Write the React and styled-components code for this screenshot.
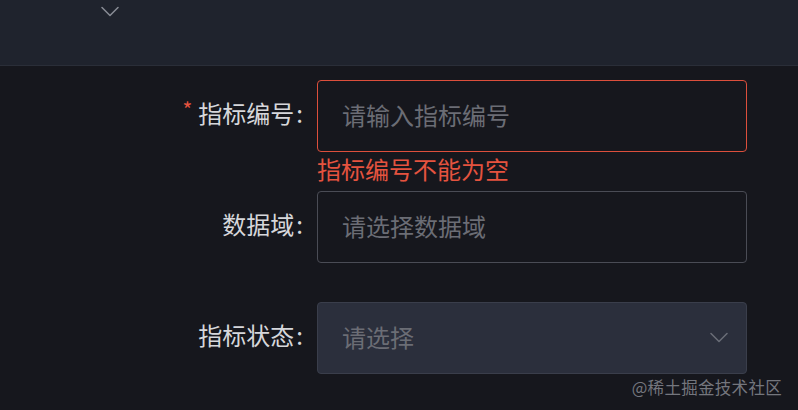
import React from "react";
import styled, { createGlobalStyle } from "styled-components";

const Global = createGlobalStyle`
  html, body { margin: 0; padding: 0; background: #16171d; }
  body { font-family: "Noto Sans CJK SC", "Noto Sans", sans-serif; }
  * { box-sizing: border-box; }
`;

const Page = styled.div`
  position: relative;
  width: 798px;
  height: 410px;
  background: #16171d;
  overflow: hidden;
`;

const TopBand = styled.div`
  height: 66px;
  background: #1f232d;
  border-bottom: 1px solid #2a2e38;
  display: flex;
  align-items: flex-start;
  padding: 6px 0 0 101px;
`;

const Form = styled.div`
  padding-top: 14px;
  display: flex;
  flex-direction: column;
`;

const Item = styled.div`
  display: grid;
  grid-template-columns: 317px 430px;
  margin-bottom: ${(p) => (p.$hasError ? "0" : "39px")};
`;

const Label = styled.label`
  display: flex;
  align-items: center;
  justify-content: flex-end;
  padding-right: 14px;
  padding-bottom: 7px;
  height: 72px;
  font-size: 24px;
  line-height: 1;
  color: #d6d7db;
`;

const Star = styled.span`
  color: #e5533f;
  font-size: 21px;
  margin-right: 6px;
  position: relative;
  top: -3px;
`;

const Colon = styled.span`
  margin-left: 2px;
`;

const Control = styled.div`
  display: flex;
  flex-direction: column;
`;

const Field = styled.div`
  height: 72px;
  border-radius: 4px;
  border: 1px solid ${(p) => (p.$error ? "#dc4f3c" : p.$select ? "#3a3e4b" : "#4a4c55")};
  background: ${(p) => (p.$select ? "#2b2f3c" : "transparent")};
  display: flex;
  align-items: center;
  justify-content: space-between;
  padding: 0 18px 2px 24px;
  font-size: 24px;
  line-height: 1;
  color: #6b6d75;
`;

const ErrorText = styled.div`
  height: 39px;
  padding-top: 5px;
  font-size: 24px;
  line-height: 1;
  color: #e5533f;
`;

const Watermark = styled.div`
  position: absolute;
  right: 16px;
  bottom: 15px;
  font-size: 16.5px;
  line-height: 1;
  color: #74767d;
  letter-spacing: 0.3px;
`;

const Chevron = ({ color = "#7d808a", w = 18 }) => (
  <svg width={w} height={w / 2 + 2} viewBox="0 0 18 11" fill="none">
    <path d="M1 1.5 L9 9.5 L17 1.5" stroke={color} strokeWidth="1.5" strokeLinecap="round" strokeLinejoin="round" />
  </svg>
);

export default function App() {
  return (
    <Page>
      <Global />
      <TopBand>
        <Chevron color="#8a8d96" w={18} />
      </TopBand>
      <Form>
        <Item $hasError>
          <Label>
            <Star>*</Star>指标编号<Colon>:</Colon>
          </Label>
          <Control>
            <Field $error>请输入指标编号</Field>
            <ErrorText>指标编号不能为空</ErrorText>
          </Control>
        </Item>
        <Item>
          <Label>
            数据域<Colon>:</Colon>
          </Label>
          <Control>
            <Field>请选择数据域</Field>
          </Control>
        </Item>
        <Item>
          <Label>
            指标状态<Colon>:</Colon>
          </Label>
          <Control>
            <Field $select>
              请选择
              <Chevron color="#6b6e78" w={18} />
            </Field>
          </Control>
        </Item>
      </Form>
      <Watermark>@稀土掘金技术社区</Watermark>
    </Page>
  );
}
